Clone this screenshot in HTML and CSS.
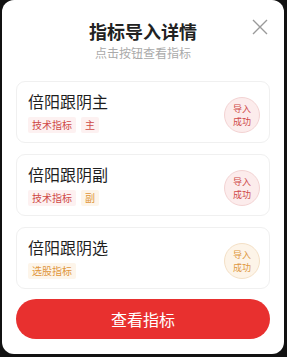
FILE: index.html
```html
<!DOCTYPE html>
<html lang="zh">
<head>
<meta charset="utf-8">
<link rel="stylesheet" href="styles.css">
</head>
<body>
<div class="modal">
  <div class="header">
    <div class="title">指标导入详情</div>
    <div class="subtitle">点击按钮查看指标</div>
    <svg class="close" width="16" height="16" viewBox="0 0 16 16"><path d="M1 1L15 15M15 1L1 15" stroke="#9a9a9a" stroke-width="1.4" fill="none"/></svg>
  </div>
  <div class="list">
    <div class="card">
      <div class="info">
        <div class="name">倍阳跟阴主</div>
        <div class="tags"><span class="tag red">技术指标</span><span class="tag red">主</span></div>
      </div>
      <div class="badge red"><span>导入</span><span>成功</span></div>
    </div>
    <div class="card">
      <div class="info">
        <div class="name">倍阳跟阴副</div>
        <div class="tags"><span class="tag red">技术指标</span><span class="tag orange">副</span></div>
      </div>
      <div class="badge red"><span>导入</span><span>成功</span></div>
    </div>
    <div class="card">
      <div class="info">
        <div class="name">倍阳跟阴选</div>
        <div class="tags"><span class="tag orange">选股指标</span></div>
      </div>
      <div class="badge orange"><span>导入</span><span>成功</span></div>
    </div>
  </div>
  <button class="btn">查看指标</button>
</div>
</body>
</html>
```
FILE: styles.css
```css
html, body {
  margin: 0;
  padding: 0;
  background: #111;
}
body {
  width: 287px;
  height: 357px;
  overflow: hidden;
  font-family: "Noto Sans CJK SC", "Noto Sans", sans-serif;
}
.modal {
  margin-left: 2px;
  width: 282px;
  height: 354px;
  background: #fff;
  border-radius: 12px;
  box-sizing: border-box;
  padding: 19px 14px 0;
  display: flex;
  flex-direction: column;
}
.header {
  position: relative;
  text-align: center;
}
.title {
  font-size: 18px;
  line-height: 24px;
  font-weight: 700;
  color: #222;
}
.subtitle {
  margin-top: 2px;
  font-size: 12px;
  line-height: 16px;
  color: #aaa;
}
.close {
  position: absolute;
  right: 2px;
  top: 0px;
}
.list {
  margin-top: 20px;
  display: flex;
  flex-direction: column;
  gap: 11px;
}
.card {
  height: 62px;
  box-sizing: border-box;
  border: 1px solid #f0f0f0;
  border-radius: 9px;
  padding: 8px 9px 0 11px;
  display: flex;
  align-items: flex-start;
  justify-content: space-between;
}
.name {
  font-size: 16px;
  line-height: 22px;
  color: #1e1e1e;
}
.tags {
  margin-top: 5px;
  display: flex;
  gap: 5px;
}
.tag {
  font-size: 10px;
  line-height: 16px;
  padding: 0 4px;
  border-radius: 2px;
}
.tag.red {
  background: #fdf1f1;
  color: #cf4a48;
}
.tag.orange {
  background: #fdf5ea;
  color: #e0963a;
}
.badge {
  margin-top: 7px;
  width: 36px;
  height: 36px;
  box-sizing: border-box;
  border-radius: 50%;
  font-size: 9px;
  line-height: 13px;
  display: flex;
  flex-direction: column;
  align-items: center;
  justify-content: center;
  text-align: center;
}
.badge span {
  display: block;
  height: 13px;
}
.badge.red {
  background: #fcecec;
  border: 1px solid #f3d3d3;
  color: #cf4a48;
}
.badge.orange {
  background: #fdf4e8;
  border: 1px solid #f4e0c6;
  color: #de9840;
}
.btn {
  margin-top: 10px;
  height: 40px;
  border: none;
  border-radius: 20px;
  background: #e8302f;
  color: #fff;
  font-family: inherit;
  font-size: 16px;
  padding: 0;
  width: 100%;
}
```
